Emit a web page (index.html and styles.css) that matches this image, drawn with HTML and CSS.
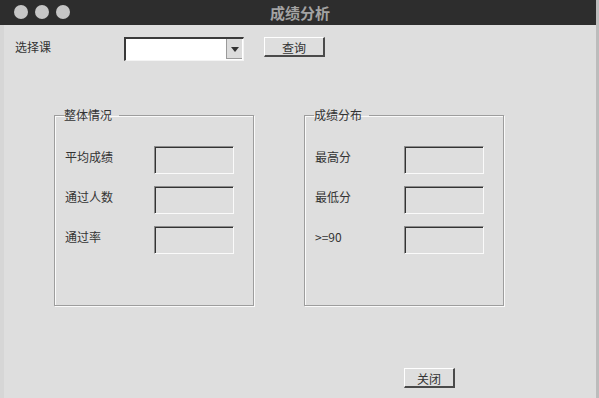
FILE: index.html
```html
<!DOCTYPE html>
<html lang="zh-CN">
<head>
    <meta charset="UTF-8">
    <title>成绩分析</title>
    <link rel="stylesheet" href="styles.css">
</head>
<body>
    <div class="window">
        <div class="titlebar">
            <div class="lights">
                <span class="light"></span>
                <span class="light"></span>
                <span class="light"></span>
            </div>
            <div class="title">成绩分析</div>
        </div>

        <div class="content">
            <div class="query-row">
                <label class="course-label">选择课</label>
                <div class="combo">
                    <div class="combo-text"></div>
                    <div class="combo-btn"><span class="arrow"></span></div>
                </div>
                <button class="btn query-btn">查询</button>
            </div>

            <div class="groups">
                <fieldset class="group">
                    <legend>整体情况</legend>
                    <div class="field-row">
                        <span class="field-label">平均成绩</span>
                        <div class="field"></div>
                    </div>
                    <div class="field-row">
                        <span class="field-label">通过人数</span>
                        <div class="field"></div>
                    </div>
                    <div class="field-row">
                        <span class="field-label">通过率</span>
                        <div class="field"></div>
                    </div>
                </fieldset>

                <fieldset class="group">
                    <legend>成绩分布</legend>
                    <div class="field-row">
                        <span class="field-label">最高分</span>
                        <div class="field"></div>
                    </div>
                    <div class="field-row">
                        <span class="field-label">最低分</span>
                        <div class="field"></div>
                    </div>
                    <div class="field-row">
                        <span class="field-label">&gt;=90</span>
                        <div class="field"></div>
                    </div>
                </fieldset>
            </div>

            <div class="footer">
                <button class="btn close-btn">关闭</button>
            </div>
        </div>
    </div>
</body>
</html>
```

FILE: styles.css
```css
html, body {
    margin: 0;
    padding: 0;
}

body {
    width: 599px;
    height: 398px;
    overflow: hidden;
    background: #dedede;
    font-family: "Noto Sans CJK SC", "Noto Sans", sans-serif;
    font-size: 12px;
    color: #333;
}

.window {
    height: 398px;
    border-right: 3px solid #bcbcbc;
    box-sizing: border-box;
}

/* title bar */
.titlebar {
    position: relative;
    height: 25px;
    background: #2d2d2d;
    display: flex;
    align-items: center;
    justify-content: center;
}

.lights {
    position: absolute;
    left: 14px;
    top: 5px;
    display: flex;
    gap: 7px;
}

.light {
    width: 14px;
    height: 14px;
    border-radius: 50%;
    background: #c6c6c6;
}

.title {
    color: #a3a3a3;
    font-size: 15px;
    font-weight: bold;
    padding-left: 4px;
}

.content {
    height: 373px;
    border-left: 4px solid #d6d6d6;
    box-sizing: border-box;
}

/* query row */
.query-row {
    display: flex;
    align-items: flex-start;
    padding-top: 12px;
    padding-left: 11px;
}

.course-label {
    width: 109px;
    padding-top: 1px;
}

.combo {
    width: 120px;
    height: 24px;
    box-sizing: border-box;
    display: flex;
    background: #fff;
    border-top: 2px solid #3a3a3a;
    border-left: 2px solid #3a3a3a;
    border-right: 1px solid #f4f4f4;
    border-bottom: 1px solid #f4f4f4;
}

.combo-text {
    flex: 1;
}

.combo-btn {
    width: 15px;
    margin: 0 1px 1px 0;
    background: #dcdcdc;
    border-left: 1px solid #9a9a9a;
    border-bottom: 1px solid #9a9a9a;
    display: flex;
    align-items: center;
    justify-content: center;
}

.arrow {
    width: 0;
    height: 0;
    border-left: 4px solid transparent;
    border-right: 4px solid transparent;
    border-top: 5px solid #333;
    margin-top: 1px;
}

.btn {
    font-family: inherit;
    font-size: 12px;
    color: #333;
    background: #dedede;
    border-top: 1px solid #fff;
    border-left: 1px solid #fff;
    border-right: 2px solid #4a4a4a;
    border-bottom: 2px solid #4a4a4a;
    padding: 2px 0 0;
    line-height: 16px;
    box-sizing: border-box;
}

.query-btn {
    width: 61px;
    height: 20px;
    margin-left: 20px;
}

/* group boxes */
.groups {
    display: flex;
    gap: 50px;
    padding-left: 50px;
    margin-top: 47px;
}

.group {
    width: 200px;
    height: 198px;
    box-sizing: border-box;
    margin: 0;
    padding: 0 0 0 10px;
    border: 1px solid #9d9d9d;
    box-shadow: 1px 1px 0 #fafafa, inset 1px 1px 0 #fafafa;
}

.group legend {
    padding: 0 7px 0 0;
    margin-left: -1px;
    line-height: 14px;
}

.field-row {
    display: flex;
    align-items: flex-start;
    height: 40px;
}

.field-row:first-of-type {
    margin-top: 24px;
}

.field-label {
    width: 89px;
    padding-top: 2px;
}

.field {
    width: 80px;
    height: 28px;
    box-sizing: border-box;
    border-top: 1px solid #8c8c8c;
    border-left: 1px solid #8c8c8c;
    border-right: 1px solid #fafafa;
    border-bottom: 1px solid #fafafa;
    box-shadow: inset 1px 1px 0 #333;
}

/* footer */
.footer {
    padding-left: 400px;
    margin-top: 62px;
}

.close-btn {
    width: 51px;
    height: 20px;
}
```
